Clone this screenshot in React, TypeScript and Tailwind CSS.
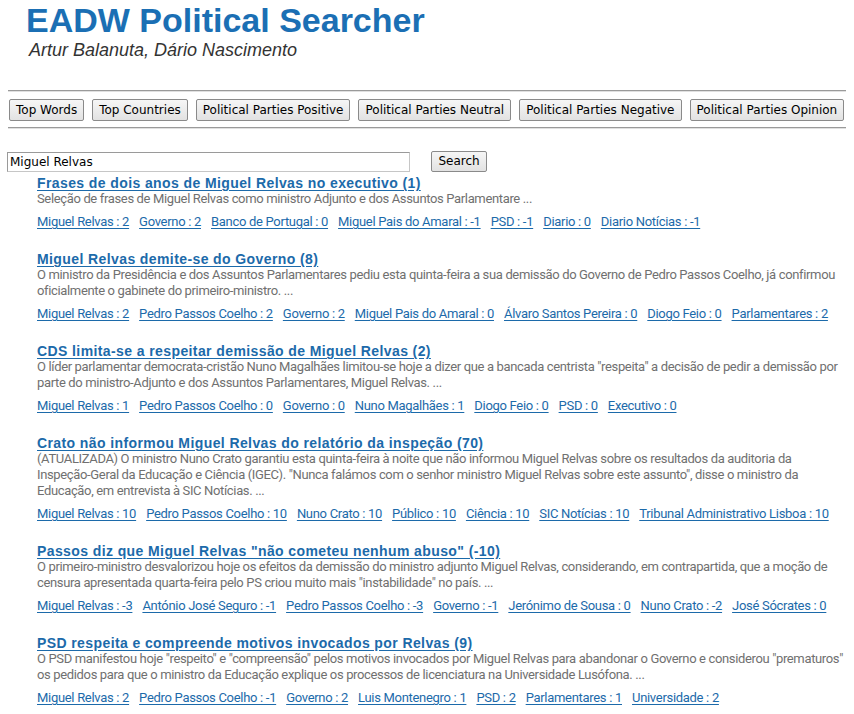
import React from "react";

type Item = { title: string; snippet: string; links: string[] };

const items: Item[] = [
  {
    title: "Frases de dois anos de Miguel Relvas no executivo (1)",
    snippet:
      "Seleção de frases de Miguel Relvas como ministro Adjunto e dos Assuntos Parlamentare ...",
    links: [
      "Miguel Relvas : 2",
      "Governo : 2",
      "Banco de Portugal : 0",
      "Miguel Pais do Amaral : -1",
      "PSD : -1",
      "Diario : 0",
      "Diario Notícias : -1",
    ],
  },
  {
    title: "Miguel Relvas demite-se do Governo (8)",
    snippet:
      "O ministro da Presidência e dos Assuntos Parlamentares pediu esta quinta-feira a sua demissão do Governo de Pedro Passos Coelho, já confirmou oficialmente o gabinete do primeiro-ministro. ...",
    links: [
      "Miguel Relvas : 2",
      "Pedro Passos Coelho : 2",
      "Governo : 2",
      "Miguel Pais do Amaral : 0",
      "Álvaro Santos Pereira : 0",
      "Diogo Feio : 0",
      "Parlamentares : 2",
    ],
  },
  {
    title: "CDS limita-se a respeitar demissão de Miguel Relvas (2)",
    snippet:
      'O líder parlamentar democrata-cristão Nuno Magalhães limitou-se hoje a dizer que a bancada centrista "respeita" a decisão de pedir a demissão por parte do ministro-Adjunto e dos Assuntos Parlamentares, Miguel Relvas. ...',
    links: [
      "Miguel Relvas : 1",
      "Pedro Passos Coelho : 0",
      "Governo : 0",
      "Nuno Magalhães : 1",
      "Diogo Feio : 0",
      "PSD : 0",
      "Executivo : 0",
    ],
  },
  {
    title: "Crato não informou Miguel Relvas do relatório da inspeção (70)",
    snippet:
      '(ATUALIZADA) O ministro Nuno Crato garantiu esta quinta-feira à noite que não informou Miguel Relvas sobre os resultados da auditoria da Inspeção-Geral da Educação e Ciência (IGEC). "Nunca falámos com o senhor ministro Miguel Relvas sobre este assunto", disse o ministro da Educação, em entrevista à SIC Notícias. ...',
    links: [
      "Miguel Relvas : 10",
      "Pedro Passos Coelho : 10",
      "Nuno Crato : 10",
      "Público : 10",
      "Ciência : 10",
      "SIC Notícias : 10",
      "Tribunal Administrativo Lisboa : 10",
    ],
  },
  {
    title: 'Passos diz que Miguel Relvas "não cometeu nenhum abuso" (-10)',
    snippet:
      'O primeiro-ministro desvalorizou hoje os efeitos da demissão do ministro adjunto Miguel Relvas, considerando, em contrapartida, que a moção de censura apresentada quarta-feira pelo PS criou muito mais "instabilidade" no país. ...',
    links: [
      "Miguel Relvas : -3",
      "António José Seguro : -1",
      "Pedro Passos Coelho : -3",
      "Governo : -1",
      "Jerónimo de Sousa : 0",
      "Nuno Crato : -2",
      "José Sócrates : 0",
    ],
  },
  {
    title: "PSD respeita e compreende motivos invocados por Relvas (9)",
    snippet:
      'O PSD manifestou hoje "respeito" e "compreensão" pelos motivos invocados por Miguel Relvas para abandonar o Governo e considerou "prematuros" os pedidos para que o ministro da Educação explique os processos de licenciatura na Universidade Lusófona. ...',
    links: [
      "Miguel Relvas : 2",
      "Pedro Passos Coelho : -1",
      "Governo : 2",
      "Luis Montenegro : 1",
      "PSD : 2",
      "Parlamentares : 1",
      "Universidade : 2",
    ],
  },
];

const buttons = [
  "Top Words",
  "Top Countries",
  "Political Parties Positive",
  "Political Parties Neutral",
  "Political Parties Negative",
  "Political Parties Opinion",
];

function Hr() {
  return <div className="h-[2px] border-t border-t-[#9a9a9a] border-b border-b-[#e0e0e0]" />;
}

export default function App() {
  return (
    <div className="min-h-[714px] bg-white px-[8px] font-['Liberation_Sans',Arial,sans-serif]">
      <div className="pt-[1px] pl-[18px]">
        <h1 className="text-[34px] leading-[38px] font-bold text-[#1b6fb4]">EADW Political Searcher</h1>
        <div className="mt-[1px] pl-[3px] text-[18px] leading-[21px] italic text-[#333]">
          Artur Balanuta, Dário Nascimento
        </div>
      </div>

      <div className="mt-[29px]">
        <Hr />
      </div>
      <div className="mt-[7px] flex gap-[8px] pl-[1px] font-['DejaVu_Sans',sans-serif]">
        {buttons.map((b) => (
          <button
            key={b}
            className="h-[22px] px-[6px] text-[12px] leading-[20px] text-black border border-[#8a8a8a] rounded-[2px] bg-gradient-to-b from-[#f6f6f6] to-[#e2e2e2]"
          >
            {b}
          </button>
        ))}
      </div>
      <div className="mt-[6px]">
        <Hr />
      </div>

      <div className="mt-[22px] flex items-center font-['DejaVu_Sans',sans-serif]">
        <div className="-ml-[1px] h-[20px] w-[403px] border border-[#c6c6c6] border-t-[#9a9a9a] border-l-[#9a9a9a] pl-[2px] text-[12px] leading-[18px] text-black">
          Miguel Relvas
        </div>
        <button className="ml-[21px] h-[21px] w-[56px] text-[12px] leading-[19px] text-black border border-[#8a8a8a] rounded-[2px] bg-gradient-to-b from-[#f6f6f6] to-[#e2e2e2]">
          Search
        </button>
      </div>

      <div className="mt-[3px] pl-[29px]">
        {items.map((it) => (
          <div key={it.title} className="mb-[21px]">
            <a className="block text-[14px] leading-[16px] font-bold tracking-[0.4px] text-[#1c6aaa] underline underline-offset-[2px] cursor-pointer">
              {it.title}
            </a>
            <p className="text-[13px] leading-[16px] tracking-[-0.35px] text-[#707070] font-['Roboto',sans-serif]">
              {it.snippet}
            </p>
            <div className="mt-[7px] flex flex-wrap gap-x-[10px] text-[13px] leading-[16px] tracking-[-0.3px] font-['Roboto',sans-serif]">
              {it.links.map((l) => (
                <a key={l} className="text-[#1c6aaa] underline underline-offset-[2px] cursor-pointer">
                  {l}
                </a>
              ))}
            </div>
          </div>
        ))}
      </div>
    </div>
  );
}
